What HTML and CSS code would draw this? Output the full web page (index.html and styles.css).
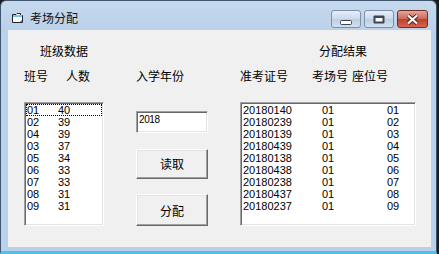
FILE: index.html
```html
<!DOCTYPE html>
<html lang="zh-CN">
<head>
<meta charset="UTF-8">
<title>考场分配</title>
<link rel="stylesheet" href="styles.css">
</head>
<body>
  <div class="window">
    <!-- title bar -->
    <div class="titlebar">
      <svg class="app-icon" width="11" height="10" viewBox="0 0 11 10">
        <path d="M0.5 1.5 H4 L5 0.5 H8.5 V2.5 H10.5 V9.5 H0.5 Z" fill="#fff" stroke="#1d2630" stroke-width="1"/>
        <rect x="1" y="2" width="9" height="2" fill="#7fc6dc"/>
        <path d="M8 9.5 L10.5 7" stroke="#1d2630" stroke-width="1"/>
      </svg>
      <span class="title">考场分配</span>
      <div class="caption">
        <div class="cap-btn">
          <svg width="12" height="5" viewBox="0 0 12 5"><rect x="0.5" y="0.5" width="11" height="4" rx="1" fill="#fff" stroke="#3a4656"/></svg>
        </div>
        <div class="cap-btn">
          <svg width="12" height="9" viewBox="0 0 12 9"><rect x="0.5" y="0.5" width="11" height="8" rx="1" fill="#3a4656"/><rect x="2.5" y="3" width="7" height="3.5" fill="#fff"/></svg>
        </div>
        <div class="cap-btn close">
          <svg width="13" height="11" viewBox="0 0 13 11"><path d="M2 1.5 L11 9.5 M11 1.5 L2 9.5" stroke="#5a1d14" stroke-width="4"/><path d="M2 1.5 L11 9.5 M11 1.5 L2 9.5" stroke="#fff" stroke-width="2.2"/></svg>
        </div>
      </div>
    </div>

    <!-- form -->
    <div class="client">
      <div class="form-grid">
        <div class="group-title title-left">班级数据</div>
        <div></div>
        <div class="group-title title-right">分配结果</div>

        <div class="heads heads-left"><span>班号</span><span>人数</span></div>
        <div class="heads">入学年份</div>
        <div class="heads heads-right"><span>准考证号</span><span>考场号</span><span>座位号</span></div>

        <div class="listbox">
          <div class="row row-left focused"><span>01</span><span>40</span></div>
          <div class="row row-left"><span>02</span><span>39</span></div>
          <div class="row row-left"><span>04</span><span>39</span></div>
          <div class="row row-left"><span>03</span><span>37</span></div>
          <div class="row row-left"><span>05</span><span>34</span></div>
          <div class="row row-left"><span>06</span><span>33</span></div>
          <div class="row row-left"><span>07</span><span>33</span></div>
          <div class="row row-left"><span>08</span><span>31</span></div>
          <div class="row row-left"><span>09</span><span>31</span></div>
        </div>

        <div class="controls">
          <div class="textbox">2018</div>
          <button class="btn btn-read">读取</button>
          <button class="btn btn-assign">分配</button>
        </div>

        <div class="listbox">
          <div class="row row-right"><span>20180140</span><span>01</span><span>01</span></div>
          <div class="row row-right"><span>20180239</span><span>01</span><span>02</span></div>
          <div class="row row-right"><span>20180139</span><span>01</span><span>03</span></div>
          <div class="row row-right"><span>20180439</span><span>01</span><span>04</span></div>
          <div class="row row-right"><span>20180138</span><span>01</span><span>05</span></div>
          <div class="row row-right"><span>20180438</span><span>01</span><span>06</span></div>
          <div class="row row-right"><span>20180238</span><span>01</span><span>07</span></div>
          <div class="row row-right"><span>20180437</span><span>01</span><span>08</span></div>
          <div class="row row-right"><span>20180237</span><span>01</span><span>09</span></div>
        </div>
      </div>
    </div>
  </div>
</body>
</html>
```

FILE: styles.css
```css
body {
  margin: 0;
  background-color: #1b1b1b;
  font-family: "Liberation Sans", Arial, sans-serif;
}

.window {
  width: 437px;
  height: 254px;
  box-sizing: border-box;
  border: 1px solid #3f5570;
  border-bottom: 3px solid #4fc0e8;
  border-radius: 6px 6px 0 0;
  background: linear-gradient(#c6d9ee, #b9d1ea 30px);
  padding: 0 5px 0 7px;
  display: flex;
  flex-direction: column;
  overflow: hidden;
}

/* title bar */
.titlebar {
  height: 29px;
  flex: none;
  display: flex;
  align-items: flex-start;
}

.app-icon {
  margin: 12px 0 0 4px;
}

.title {
  margin: 10px 0 0 7px;
  font-family: "Noto Sans CJK SC", sans-serif;
  font-size: 12px;
  line-height: 14px;
  color: #111;
}

.caption {
  margin: 9px 3px 0 auto;
  display: flex;
  gap: 3px;
}

.cap-btn {
  width: 28px;
  height: 16px;
  border: 1px solid #7d90a8;
  border-radius: 3px;
  background: linear-gradient(#e6eef8, #cbd9ea 50%, #bccde3 51%, #d3e0ef);
  display: flex;
  align-items: center;
  justify-content: center;
}

.cap-btn:first-child svg {
  margin-top: 7px;
}

.cap-btn.close {
  width: 29px;
  border-color: #6f2e25;
  background: linear-gradient(#e3a69b, #cf6656 50%, #bf3e2c 51%, #d5664f);
}

/* client area */
.client {
  height: 217px;
  flex: none;
  background-color: #f0f0f0;
  box-sizing: border-box;
  padding: 15px 0 0 16px;
}

.form-grid {
  display: grid;
  grid-template-columns: 80px 72px 176px;
  grid-template-rows: 25px 32px 124px;
  column-gap: 32px;
}

.group-title,
.heads {
  font-family: "Noto Sans CJK SC", sans-serif;
  font-size: 12px;
  line-height: 12px;
  color: #000;
}

.title-left {
  padding-left: 16px;
}

.title-right {
  padding-left: 79px;
}

.heads-left {
  display: grid;
  grid-template-columns: 42px auto;
}

.heads-right {
  display: grid;
  grid-template-columns: 72px 40px auto;
}

/* list boxes */
.listbox {
  background-color: #fff;
  border: 1px solid;
  border-color: #a0a0a0 #fff #fff #a0a0a0;
  box-shadow: inset 1px 1px 0 #696969, inset -1px -1px 0 #e3e3e3;
  padding: 1px;
}

.row {
  display: grid;
  height: 12px;
  font-size: 11px;
  line-height: 12px;
  color: #000;
  padding-left: 1px;
}

.row-left {
  grid-template-columns: 31px auto;
}

.row-right {
  grid-template-columns: 79px 65px auto;
}

.focused {
  outline: 1px dotted #000;
  outline-offset: -1px;
}

/* middle column */
.controls {
  display: flex;
  flex-direction: column;
}

.textbox {
  margin-top: 9px;
  height: 23px;
  box-sizing: border-box;
  background-color: #fff;
  border: 1px solid;
  border-color: #a0a0a0 #fff #fff #a0a0a0;
  box-shadow: inset 1px 1px 0 #696969, inset -1px -1px 0 #e3e3e3;
  padding: 2px 0 0 2px;
  font-size: 10px;
  line-height: 12px;
  letter-spacing: -0.4px;
}

.btn {
  width: 72px;
  padding: 0;
  background-color: #f0f0f0;
  border: 1px solid;
  border-color: #fff #696969 #696969 #fff;
  box-shadow: inset -1px -1px 0 #a0a0a0, inset 1px 1px 0 #e3e3e3;
  font-family: "Noto Sans CJK SC", sans-serif;
  font-size: 12px;
  color: #000;
}

.btn-read {
  margin-top: 16px;
  height: 33px;
}

.btn-assign {
  margin-top: 15px;
  height: 34px;
}
```
